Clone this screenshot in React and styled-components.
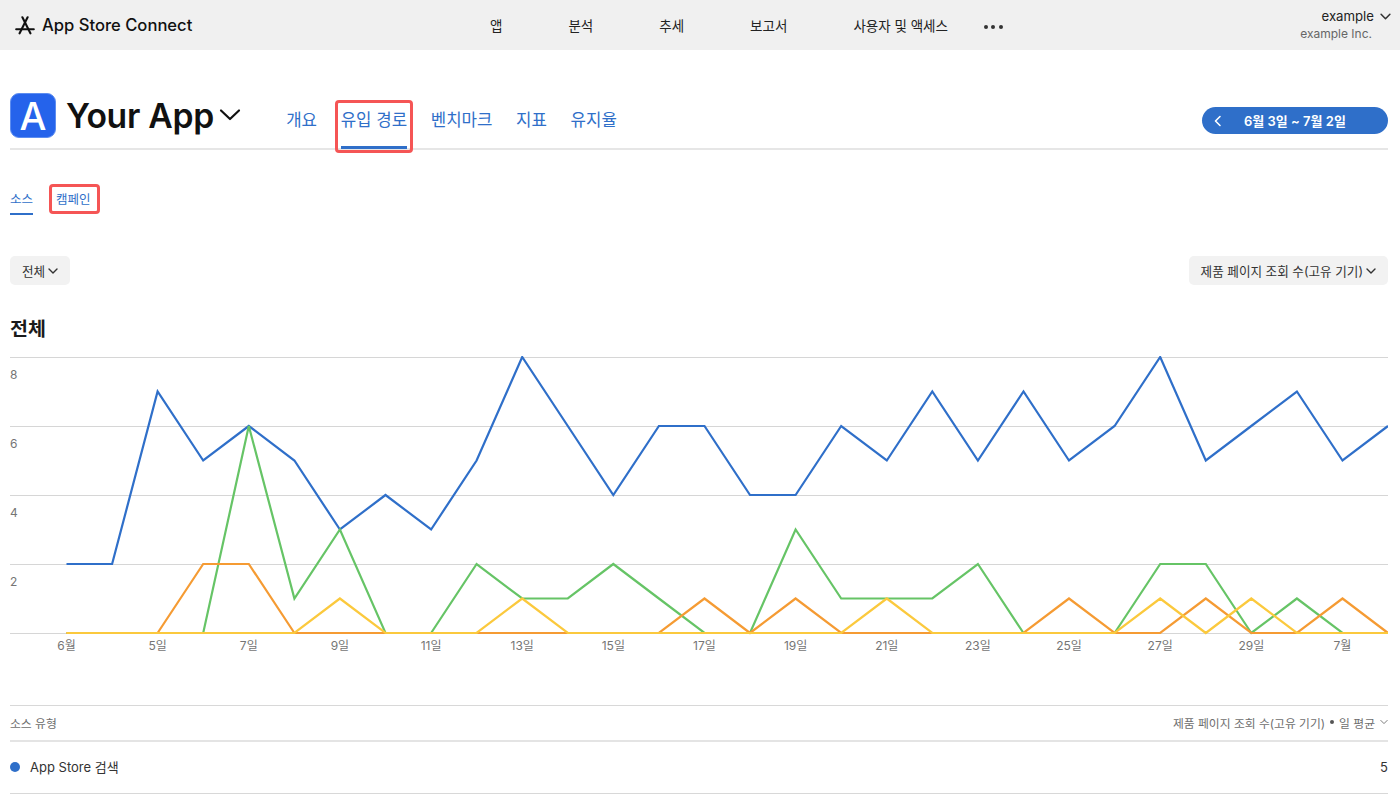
import React from 'react';
import styled, { createGlobalStyle } from 'styled-components';

const sans = `Inter, "Noto Sans CJK KR", "Liberation Sans", sans-serif`;
const blue = '#2f6fc9';

const Global = createGlobalStyle`
  html, body { margin: 0; padding: 0; background: #fff; }
  body { font-family: ${sans}; color: #1d1d1f; }
  * { box-sizing: border-box; }
`;

const Page = styled.div`
  width: 1400px;
  height: 800px;
  overflow: hidden;
`;

const TopBar = styled.header`
  height: 50px;
  background: #f0f0f0;
  display: grid;
  grid-template-columns: 475px 1fr auto;
  align-items: center;
  padding: 0 9px 0 15px;
`;

const Brand = styled.div`
  display: flex;
  align-items: center;
  gap: 7px;
  font-size: 16.6px;
  font-weight: 500;
  color: #111;
`;

const MainNav = styled.nav`
  display: flex;
  align-items: center;
  font-size: 13.5px;
  color: #222;
`;

const MainNavItem = styled.span`
  margin-right: ${(p) => p.$gap}px;
`;

const Dots = styled.span`
  display: flex;
  gap: 3.5px;
  margin-top: 4px;
`;

const Dot = styled.i`
  display: block;
  width: 4px;
  height: 4px;
  border-radius: 50%;
  background: #333;
`;

const Account = styled.div`
  display: flex;
  flex-direction: column;
  align-items: flex-end;
  gap: 2px;
  margin-top: -1px;
`;

const AccountName = styled.div`
  display: flex;
  align-items: center;
  gap: 6px;
  font-size: 13.2px;
  color: #222;
`;

const AccountOrg = styled.div`
  font-size: 12px;
  color: #666;
  margin-right: 19px;
`;

const Content = styled.main`
  padding: 0 12px 0 10px;
`;

const AppRow = styled.section`
  height: 100px;
  display: flex;
  align-items: flex-start;
  border-bottom: 2px solid #e6e6e6;
`;

const AppIcon = styled.div`
  width: 46px;
  height: 45px;
  margin-top: 43px;
  border-radius: 9px;
  background: #2563eb;
  border: 1px solid #5d8df0;
  color: #fff;
  font-size: 38px;
  font-weight: 500;
  line-height: 44px;
  text-align: center;
`;

const AppTitle = styled.h1`
  margin: 43px 0 0 10px;
  font-size: 33.7px;
  line-height: 45px;
  font-weight: 600;
  letter-spacing: -0.3px;
  color: #111;
`;

const TitleChevron = styled.svg`
  margin: 58px 0 0 5px;
  width: 22px;
  height: 14px;
  flex: none;
`;

const Tabs = styled.nav`
  display: flex;
  gap: 23.6px;
  margin-left: 45.3px;
  height: 100px;
`;

const Tab = styled.a`
  position: relative;
  display: block;
  height: 100px;
  padding-top: 58px;
  font-size: 16.8px;
  line-height: 24px;
  color: ${blue};
  white-space: nowrap;
  ${(p) => p.$active && `box-shadow: inset 0 -3px 0 0 ${blue}; height: 99px;`}
`;

const Marker = styled.span`
  position: absolute;
  border: 3px solid #f55555;
  border-radius: 4px;
  pointer-events: none;
  left: ${(p) => p.$left}px;
  right: ${(p) => p.$right}px;
  top: ${(p) => p.$top}px;
  bottom: ${(p) => p.$bottom}px;
`;

const DatePill = styled.div`
  margin: 57px 0 0 auto;
  width: 186px;
  height: 27px;
  border-radius: 14px;
  background: ${blue};
  color: #fff;
  display: flex;
  align-items: center;
  padding-left: 11px;
  gap: 21px;
  font-size: 13px;
  font-weight: 600;
`;

const SubTabs = styled.nav`
  display: flex;
  gap: 23px;
  margin-top: 35px;
  height: 30px;
`;

const SubTab = styled.a`
  position: relative;
  display: block;
  height: 30px;
  font-size: 12.5px;
  line-height: 30px;
  color: ${blue};
  ${(p) => p.$active && `border-bottom: 2px solid ${blue};`}
`;

const Filters = styled.div`
  display: flex;
  justify-content: space-between;
  margin-top: 41px;
`;

const Filter = styled.button`
  height: 29px;
  padding: 0 12px;
  border: 0;
  border-radius: 5px;
  background: #f2f2f2;
  font-family: ${sans};
  font-size: 12.6px;
  color: #333;
  display: flex;
  align-items: center;
  gap: 3px;
`;

const ChartTitle = styled.h2`
  margin: 29px 0 0;
  font-size: 19.5px;
  line-height: 30px;
  font-weight: 700;
  color: #1a1a1a;
`;

const Chart = styled.svg`
  display: block;
  margin-top: 12px;
  width: 1378px;
  height: 306px;
`;

const AxisLabel = styled.text`
  font-family: ${sans};
  font-size: 12px;
  fill: #757575;
`;

const Table = styled.section`
  margin-top: 43px;
  border-top: 1px solid #d8d8d8;
`;

const TableHead = styled.div`
  height: 36px;
  padding-bottom: 2px;
  display: flex;
  align-items: center;
  justify-content: space-between;
  border-bottom: 2px solid #e4e4e4;
  font-size: 11.8px;
  color: #6e6e6e;
`;

const SortLabel = styled.div`
  display: flex;
  align-items: center;
  gap: 5px;
`;

const Bullet = styled.i`
  display: block;
  width: 4px;
  height: 4px;
  border-radius: 50%;
  background: #555;
`;

const TableRow = styled.div`
  height: 52px;
  padding-bottom: 2px;
  display: flex;
  align-items: center;
  justify-content: space-between;
  border-bottom: 1px solid #d8d8d8;
  font-size: 13px;
  color: #333;
`;

const RowLabel = styled.div`
  display: flex;
  align-items: center;
  gap: 10px;
`;

const Swatch = styled.i`
  display: block;
  width: 10px;
  height: 10px;
  border-radius: 50%;
  background: ${(p) => p.$color};
`;

const Chevron = ({ size = 10, color = '#333', width = 1.4 }) => (
  <svg width={size} height={size} viewBox="0 0 10 10" fill="none">
    <path d="M1 3l4 4 4-4" stroke={color} strokeWidth={width} strokeLinecap="round" strokeLinejoin="round" />
  </svg>
);

const Logo = () => (
  <svg width="20" height="19" viewBox="0 0 20 19" fill="none" stroke="#111" strokeWidth="2.1" strokeLinecap="round">
    <path d="M7.4 1.3l8 16" />
    <path d="M12.6 1.3l-8 16" />
    <path d="M1.2 13.2h17.6" />
  </svg>
);

const X0 = 56.5;
const STEP = 45.57;
const Y0 = 277;
const UNIT = 34.5;

const series = [
  { color: '#2f6fc9', data: [2,2,7,5,6,5,3,4,3,5,8,6,4,6,6,4,4,6,5,7,5,7,5,6,8,5,6,7,5,6] },
  { color: '#66c466', data: [0,0,0,0,6,1,3,0,0,2,1,1,2,1,0,0,3,1,1,1,2,0,0,0,2,2,0,1,0,0] },
  { color: '#f59b33', data: [0,0,0,2,2,0,0,0,0,0,0,0,0,0,1,0,1,0,0,0,0,0,1,0,0,1,0,0,1,0] },
  { color: '#fbc93d', data: [0,0,0,0,0,0,1,0,0,0,1,0,0,0,0,0,0,0,1,0,0,0,0,0,1,0,1,0,0,0] },
];

const xLabels = ['6월','5일','7일','9일','11일','13일','15일','17일','19일','21일','23일','25일','27일','29일','7월'];

const toPoints = (data) =>
  data.map((v, i) => `${(X0 + i * STEP).toFixed(1)},${Y0 - v * UNIT}`).join(' ');

export default function App() {
  return (
    <Page>
      <Global />
      <TopBar>
        <Brand><Logo />App Store Connect</Brand>
        <MainNav>
          <MainNavItem $gap={66}>앱</MainNavItem>
          <MainNavItem $gap={66}>분석</MainNavItem>
          <MainNavItem $gap={66}>추세</MainNavItem>
          <MainNavItem $gap={66}>보고서</MainNavItem>
          <MainNavItem $gap={36}>사용자 및 액세스</MainNavItem>
          <Dots><Dot /><Dot /><Dot /></Dots>
        </MainNav>
        <Account>
          <AccountName>example <Chevron size={11} /></AccountName>
          <AccountOrg>example Inc.</AccountOrg>
        </Account>
      </TopBar>
      <Content>
        <AppRow>
          <AppIcon>A</AppIcon>
          <AppTitle>Your App</AppTitle>
          <TitleChevron viewBox="0 0 22 14" fill="none">
            <path d="M2 2.5l9 8.5 9-8.5" stroke="#111" strokeWidth="2.2" strokeLinecap="round" strokeLinejoin="round" />
          </TitleChevron>
          <Tabs>
            <Tab>개요</Tab>
            <Tab $active>
              유입 경로
              <Marker $left={-6} $right={-6} $top={50} $bottom={-4} />
            </Tab>
            <Tab>벤치마크</Tab>
            <Tab>지표</Tab>
            <Tab>유지율</Tab>
          </Tabs>
          <DatePill>
            <svg width="10" height="12" viewBox="0 0 10 12" fill="none">
              <path d="M7 1.5L2.5 6 7 10.5" stroke="#fff" strokeWidth="1.6" strokeLinecap="round" strokeLinejoin="round" />
            </svg>
            6월 3일 ~ 7월 2일
          </DatePill>
        </AppRow>
        <SubTabs>
          <SubTab $active>소스</SubTab>
          <SubTab>
            캠페인
            <Marker $left={-7} $right={-9} $top={-1} $bottom={1} />
          </SubTab>
        </SubTabs>
        <Filters>
          <Filter>전체 <Chevron /></Filter>
          <Filter>제품 페이지 조회 수(고유 기기) <Chevron /></Filter>
        </Filters>
        <ChartTitle>전체</ChartTitle>
        <Chart viewBox="0 0 1378 306">
          {[0, 2, 4, 6, 8].map((v) => (
            <line key={v} x1="0" x2="1378" y1={Y0 - v * UNIT + 0.5} y2={Y0 - v * UNIT + 0.5} stroke="#d6d6d6" strokeWidth="1.2" />
          ))}
          {[8, 6, 4, 2].map((v) => (
            <AxisLabel key={v} x="0" y={Y0 - v * UNIT + 22}>{v}</AxisLabel>
          ))}
          {xLabels.map((t, i) => (
            <AxisLabel key={t} x={X0 + i * 2 * STEP} y={Y0 + 17} textAnchor="middle">{t}</AxisLabel>
          ))}
          {series.map((s) => (
            <polyline key={s.color} points={toPoints(s.data)} fill="none" stroke={s.color} strokeWidth="2.2" strokeLinejoin="miter" />
          ))}
        </Chart>
        <Table>
          <TableHead>
            <span>소스 유형</span>
            <SortLabel>
              제품 페이지 조회 수(고유 기기) <Bullet /> 일 평균 <Chevron size={8} color="#777" width={1.2} />
            </SortLabel>
          </TableHead>
          <TableRow>
            <RowLabel><Swatch $color={blue} />App Store 검색</RowLabel>
            <span>5</span>
          </TableRow>
        </Table>
      </Content>
    </Page>
  );
}
